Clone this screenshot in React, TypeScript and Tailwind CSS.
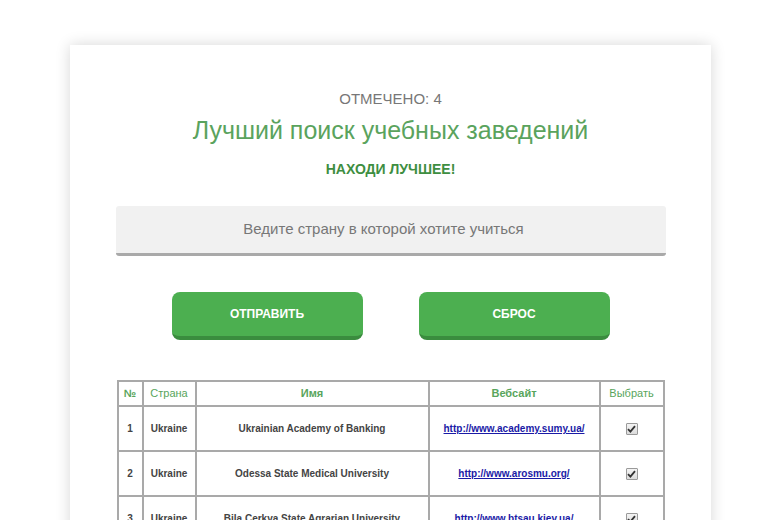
const rows = [
  { n: 1, country: "Ukraine", name: "Ukrainian Academy of Banking", url: "http://www.academy.sumy.ua/" },
  { n: 2, country: "Ukraine", name: "Odessa State Medical University", url: "http://www.arosmu.org/" },
  { n: 3, country: "Ukraine", name: "Bila Cerkva State Agrarian University", url: "http://www.btsau.kiev.ua/" },
];

function CheckBox() {
  return (
    <span className="inline-flex w-[12px] h-[12px] items-center justify-center border border-[#9a9a9a] bg-gradient-to-b from-[#f4f4f4] to-[#dcdcdc] rounded-[1px] align-middle">
      <svg width="9" height="8" viewBox="0 0 9 8">
        <path d="M1 4.2 L3.4 6.6 L8 1.2" fill="none" stroke="#333" strokeWidth="1.8" />
      </svg>
    </span>
  );
}

export default function App() {
  return (
    <div className="min-h-[520px] bg-white pt-[45px] font-['Liberation_Sans',Arial,sans-serif]">
      <div className="mx-auto w-[641px] bg-white shadow-[0_0_14px_rgba(0,0,0,0.16)] pt-[44px] pb-[40px] flex flex-col items-center">
        <div className="text-[15px] leading-[20px] text-[#777]">ОТМЕЧЕНО: 4</div>
        <h1 className="mt-[6px] text-[25px] leading-[30px] text-[#5aa35d]">Лучший поиск учебных заведений</h1>
        <div className="mt-[16px] text-[14px] leading-[16px] font-bold text-[#3e8e41]">НАХОДИ ЛУЧШЕЕ!</div>

        <div className="mt-[29px] w-[550px] h-[50px] bg-[#f1f1f1] rounded-[3px] border-b-[3px] border-[#a9a9a9] flex items-center justify-center pr-[14px] text-[15px] text-[#777]">
          Ведите страну в которой хотите учиться
        </div>

        <div className="mt-[36px] flex gap-[56px]">
          {["ОТПРАВИТЬ", "СБРОС"].map((t) => (
            <button
              key={t}
              className="w-[191px] h-[48px] rounded-[8px] bg-[#4caf50] border-b-[4px] border-[#3a8c3e] text-white text-[12px] font-bold flex items-center justify-center"
            >
              {t}
            </button>
          ))}
        </div>

        <table className="mt-[40px] w-[548px] table-fixed border-collapse border-2 border-[#a9a9a9] text-[10px]">
          <thead>
            <tr className="h-[25px] text-[#58a55c] text-[11px]">
              <th className="w-[25px] border-2 border-[#a9a9a9] font-bold">№</th>
              <th className="w-[53px] border-2 border-[#a9a9a9] font-normal">Страна</th>
              <th className="w-[233px] border-2 border-[#a9a9a9] font-bold">Имя</th>
              <th className="w-[171px] border-2 border-[#a9a9a9] font-bold">Вебсайт</th>
              <th className="border-2 border-[#a9a9a9] font-normal">Выбрать</th>
            </tr>
          </thead>
          <tbody>
            {rows.map((r) => (
              <tr key={r.n} className="h-[45px] text-[#444] font-bold text-center">
                <td className="border-2 border-[#a9a9a9]">{r.n}</td>
                <td className="border-2 border-[#a9a9a9]">{r.country}</td>
                <td className="border-2 border-[#a9a9a9]">{r.name}</td>
                <td className="border-2 border-[#a9a9a9]">
                  <a href="#" className="text-[#1a1aa6] underline">{r.url}</a>
                </td>
                <td className="border-2 border-[#a9a9a9]">
                  <CheckBox />
                </td>
              </tr>
            ))}
          </tbody>
        </table>
      </div>
    </div>
  );
}
